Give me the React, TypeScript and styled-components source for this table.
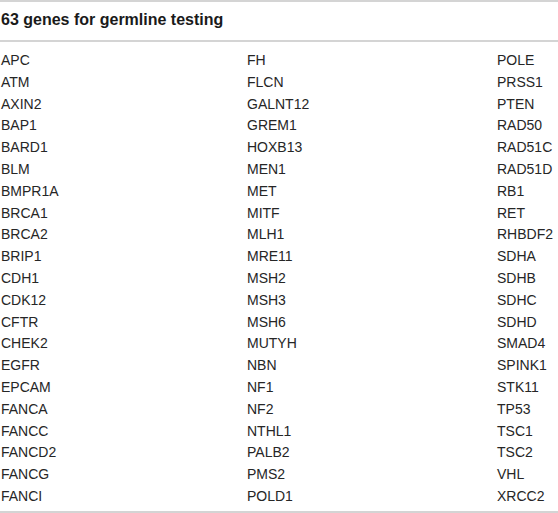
import React from "react";
import styled, { createGlobalStyle } from "styled-components";

const Global = createGlobalStyle`
  html, body { margin: 0; padding: 0; background: #ffffff; }
  body { font-family: "Liberation Sans", Arial, Helvetica, sans-serif; color: #222; }
`;

const Table = styled.div`
  width: 558px;
  border-top: 2px solid #d4d4d4;
  border-bottom: 2px solid #d4d4d4;
  box-sizing: border-box;
`;

const Header = styled.div`
  font-size: 16px;
  font-weight: 700;
  line-height: 20px;
  padding: 8px 0 10px 1px;
  border-bottom: 2px solid #d4d4d4;
  color: #1a1a1a;
`;

const Body = styled.div`
  display: grid;
  grid-template-columns: 246px 250px 1fr;
  grid-auto-rows: 21.8px;
  padding: 8px 0 3px 1px;
  font-size: 14px;
  line-height: 21.8px;
  color: #262626;
`;

const Cell = styled.div`
  white-space: nowrap;
`;

const col1 = ["APC","ATM","AXIN2","BAP1","BARD1","BLM","BMPR1A","BRCA1","BRCA2","BRIP1","CDH1","CDK12","CFTR","CHEK2","EGFR","EPCAM","FANCA","FANCC","FANCD2","FANCG","FANCI"];
const col2 = ["FH","FLCN","GALNT12","GREM1","HOXB13","MEN1","MET","MITF","MLH1","MRE11","MSH2","MSH3","MSH6","MUTYH","NBN","NF1","NF2","NTHL1","PALB2","PMS2","POLD1"];
const col3 = ["POLE","PRSS1","PTEN","RAD50","RAD51C","RAD51D","RB1","RET","RHBDF2","SDHA","SDHB","SDHC","SDHD","SMAD4","SPINK1","STK11","TP53","TSC1","TSC2","VHL","XRCC2"];

export default function App() {
  return (
    <>
      <Global />
      <Table>
        <Header>63 genes for germline testing</Header>
        <Body>
          {col1.map((g, i) => (
            <React.Fragment key={g}>
              <Cell>{g}</Cell>
              <Cell>{col2[i]}</Cell>
              <Cell>{col3[i]}</Cell>
            </React.Fragment>
          ))}
        </Body>
      </Table>
    </>
  );
}
